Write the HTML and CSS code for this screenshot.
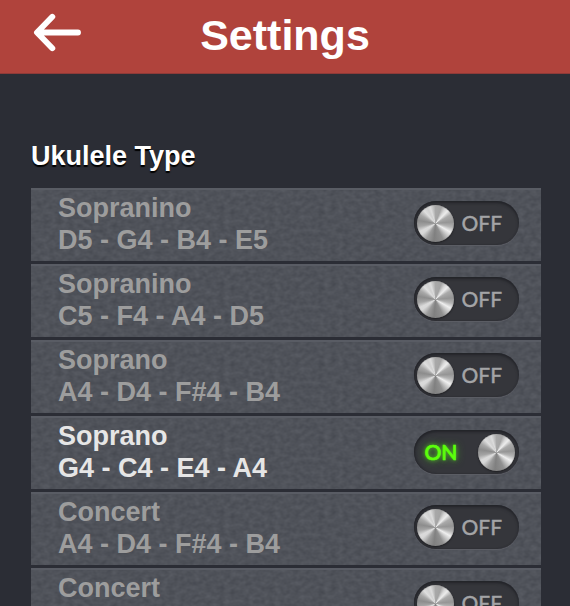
FILE: index.html
```html
<!DOCTYPE html>
<html lang="en">
<head>
<meta charset="utf-8">
<title>Settings</title>
<link rel="stylesheet" href="styles.css">
</head>
<body>
<svg class="defs" aria-hidden="true">
  <filter id="grain" x="0" y="0" width="100%" height="100%" color-interpolation-filters="sRGB">
    <feTurbulence type="fractalNoise" baseFrequency="0.16 0.22" numOctaves="2" seed="8"/>
    <feColorMatrix values="0.09 0 0 0 0.267  0.09 0 0 0 0.279  0.09 0 0 0 0.308  0 0 0 0 1"/>
  </filter>
</svg>
<header class="bar">
  <svg class="back" viewBox="0 0 50 42" role="img" aria-label="Back"><path d="M20.300 7.800L5 23.500L20.300 39.200M6 23.500H46"/></svg>
  <h1>Settings</h1>
</header>
<main>
  <h2>Ukulele Type</h2>
  <ul class="list">
    <li class="row"><div class="name">Sopranino<br>D5 - G4 - B4 - E5</div><div class="switch"><i class="knob"></i><span>OFF</span></div></li>
    <li class="row"><div class="name">Sopranino<br>C5 - F4 - A4 - D5</div><div class="switch"><i class="knob"></i><span>OFF</span></div></li>
    <li class="row"><div class="name">Soprano<br>A4 - D4 - F#4 - B4</div><div class="switch"><i class="knob"></i><span>OFF</span></div></li>
    <li class="row selected"><div class="name">Soprano<br>G4 - C4 - E4 - A4</div><div class="switch on"><span>ON</span><i class="knob"></i></div></li>
    <li class="row"><div class="name">Concert<br>A4 - D4 - F#4 - B4</div><div class="switch"><i class="knob"></i><span>OFF</span></div></li>
    <li class="row"><div class="name">Concert</div><div class="switch"><i class="knob"></i><span>OFF</span></div></li>
  </ul>
</main>
</body>
</html>
```
FILE: styles.css
```css
* { box-sizing: border-box; }
html, body { height: 606px; overflow: hidden; }
body {
  margin: 0;
  background: #2b2d35;
  font-family: "Liberation Sans", Arial, sans-serif;
  font-weight: bold;
}
.defs { position: absolute; width: 0; height: 0; }
.bar {
  display: grid;
  grid-template-columns: 100px 1fr 100px;
  height: 74px;
  background: #b0433c;
  border-bottom: 1px solid #8e3a38;
}
.back {
  width: 50px;
  height: 42px;
  margin: 9px 0 0 32px;
  overflow: visible;
  fill: none;
  stroke: #fff;
  stroke-width: 5.9;
  stroke-linecap: round;
  stroke-linejoin: round;
}
h1 {
  margin: 10px 0 0;
  color: #fff;
  font-size: 43px;
  line-height: 50px;
  text-align: center;
}
main { padding: 67px 29px 0 31px; }
h2 {
  margin: 0;
  color: #fff;
  font-size: 27px;
  line-height: 30px;
  text-shadow: 0 2px 1px #000;
}
.list {
  display: flex;
  flex-direction: column;
  gap: 3px;
  margin: 17px 0 0;
  padding: 0;
  list-style: none;
}
.row {
  position: relative;
  display: flex;
  justify-content: space-between;
  height: 73px;
  padding: 5px 22.5px 0 27px;
  color: #9d9d9d;
}
.row::before {
  content: "";
  position: absolute;
  inset: 0;
  background: #4e5159;
  filter: url(#grain);
}
.row::after {
  content: "";
  position: absolute;
  inset: 0;
  border-top: 2px solid #595c64;
}
.name {
  position: relative;
  font-size: 27px;
  line-height: 31.5px;
  white-space: nowrap;
}
.selected { color: #e6e6e6; }
.switch {
  position: relative;
  z-index: 1;
  display: flex;
  align-items: center;
  gap: 8px;
  width: 105px;
  height: 44px;
  margin-top: 8px;
  padding: 0 3px;
  border-radius: 22px;
  background: #35363b;
  box-shadow: inset 0 2px 3px #222328, inset 1px 0 2px #292a2f, 0 1px 0 #5b5d64;
  color: #a3a4a6;
  font-family: Lato, sans-serif;
  font-size: 21px;
  font-weight: 500;
}
.switch span { padding-bottom: 2px; -webkit-text-stroke: 0.3px currentColor; }
.knob {
  flex: none;
  width: 37px;
  height: 37px;
  border-radius: 50%;
  background: conic-gradient(#a8a8a8 0deg, #a4a4a4 20deg, #d8d8d8 34deg, #ececec 44deg, #aaa 60deg, #959595 85deg, #b4b4b4 103deg, #f0f0f0 120deg, #d0d0d0 132deg, #909090 155deg, #808080 185deg, #9c9c9c 210deg, #d8d8d8 232deg, #dadada 243deg, #a4a4a4 260deg, #8c8c8c 280deg, #a8a8a8 300deg, #dedede 318deg, #d0d0d0 332deg, #dcdcdc 342deg, #a8a8a8 360deg);
  box-shadow: 0 1px 2px #1d1d20, inset 0 0 1px #777;
}
.on {
  justify-content: space-between;
  margin-top: 9px;
  padding: 0 4px 0 11px;
  color: #5cff0a;
  font-weight: 500;
  text-shadow: 0 0 4px #55d31f, 0 0 8px #4aa32a;
}
.switch.on span { -webkit-text-stroke: 0.7px currentColor; }
```
